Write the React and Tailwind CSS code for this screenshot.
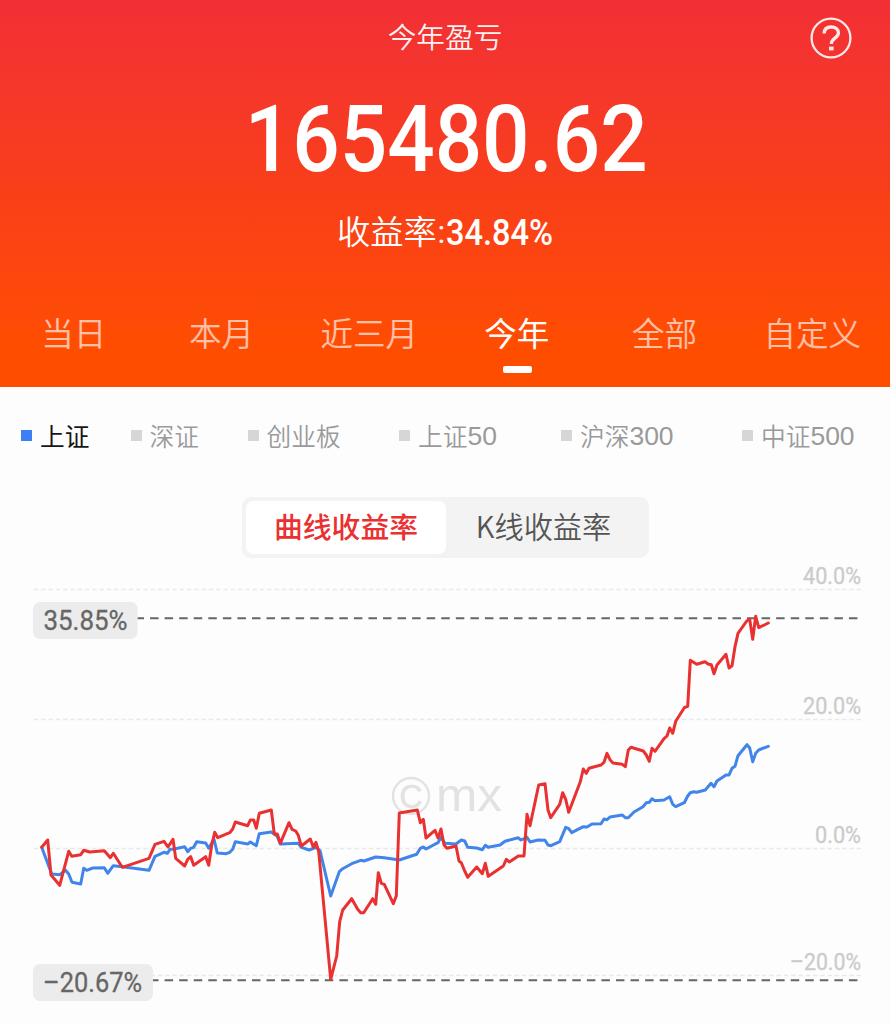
const RED =
  "41.7,847.3 47.7,840 51,875 59.7,885.3 68.7,851.3 71.7,856.3 80.7,854.7 83.7,850.3 89.7,852 104.3,850.7 110.3,857.7 113.3,853.3 122.3,867.3 149,858.3 155,844.3 164,841.3 168,847 173,839.3 175.7,858.3 184.7,866 187.7,859.3 190.7,856.7 193.7,865.3 205.7,856.7 208.7,865.3 211.7,845 214.7,832.3 217.7,837.7 229.7,832.7 232.7,829 235.3,822 247.7,825.7 250.3,820 253.7,820 256.3,828.3 259.3,813.3 271.3,810 274.3,834 277.3,834 280.3,843.3 289,822.7 292,829.3 295.7,831 298.3,835.3 301.3,846 310.3,839 313.3,847.3 316,842.3 318.7,851.7 330.7,979.3 336.7,956 339.7,921.7 342.7,910 351.7,898.7 357.7,909.3 360.7,912.7 363.7,912.7 372.7,898.7 375.7,904.3 378.3,872.7 381.3,883.3 384.3,884.3 393.3,903.7 396.3,895.7 399.3,813 417.3,810 420.3,822.7 423.3,819.3 426,838 435,830.3 438,838 441,829 444,845 447,848.3 456,846 459,861 461.3,862.7 464.7,871 467.7,877.3 476.7,867 482.3,873.7 485.3,863.3 488.3,876.3 503.3,866 506.3,859.3 509.3,862 518.3,856 524,856 527,814.3 530,825.7 538.7,785 545,783.7 548,810 550.7,817.7 559.7,804.3 562.7,792.7 565.7,799.3 568.7,812.3 580.3,781.7 583.3,769 586.3,773.3 589,768.3 601,765 604,762.3 607,753.3 610,759.7 613,763 622.3,764.3 625.3,766.7 628.3,750 631,747.3 643.3,751 646.3,755 649.3,761.3 652,748.3 655,751.3 664,738.7 667,736 669.7,728 672.7,733.3 675.7,721.3 684.3,707.7 687.7,706.3 690.3,660.3 696.7,664.3 705,661.7 708,664 711.3,664.7 714,673.7 717,665 726,654.3 729,668 732,665.7 735,646.7 738,633.3 746.7,621 749.7,619.3 752.7,639.3 755.7,616.3 758.7,627.7 768.3,623";

const BLUE =
  "41.7,847.3 51.7,874 60,874.7 65.3,870 68.7,874 72,882.3 80.7,884 83.7,868.3 86.7,870.3 92.7,868 104.3,867.7 107.7,873.3 113.3,865.7 122.3,866.7 149,870.3 155,856.3 164,852.3 167.3,853.3 170,849.3 173,849.3 184.7,846.7 187.7,851.7 190.7,848.3 193.7,847.3 196.7,841.7 205.7,843 208.7,848.3 214,839.3 217.3,853 226.3,853.7 229.7,852.3 232.7,849.3 235.3,841.7 247.7,844 250.3,842 256.3,845.7 259.3,833.7 271.3,832 277,836 280.3,844 298.3,843.3 301.3,847.3 309.3,850 316,847.3 320,850.7 330.7,896 339.3,871.7 342.7,868.7 351.7,863.7 360.7,860.3 364,861 375.7,857 384.3,857.7 399.3,860 416.7,854.3 420.3,848.3 423.3,847 426,849 438,842.7 441,837.3 445,843.3 456,844 461.3,840 464.7,841 467.7,847.3 476.7,848 482.3,849.7 485.3,845.3 488.3,847.3 500,845 505,841.3 518,837.7 521,840 527,837.3 530,842 538.3,840 545,840.3 548,845 551,845.7 559.7,841.7 565.7,827.3 568.7,828.7 571.7,832.7 583.3,826.7 587,827 592,824 601,823.7 604,819 607,819.7 610,817 622.3,815 625.3,817.7 628.3,817.7 634,812 643,806.7 646.3,802.7 649.3,802.3 652,798.7 655,800.7 664,800 669.7,796.7 672.7,804.3 675.7,806.7 684.3,802.7 687.7,796 690.3,792.7 693.7,791.7 696.7,792.3 705.3,790 711,783.3 714,786.7 717,781 726,775 729,775 732,768.3 735,766.3 738,755.7 747,744.7 749.7,748 752.7,761.7 755.7,753.3 758.7,750 768.3,746.3";

const PERIODS = ["当日", "本月", "近三月", "今年", "全部", "自定义"];

const INDICES = [
  ["上证", ""],
  ["深证", ""],
  ["创业板", ""],
  ["上证", "50"],
  ["沪深", "300"],
  ["中证", "500"],
];

const GRID = [
  { y: 589.5, label: "40.0%", x: 803, w: 58 },
  { y: 719.5, label: "20.0%", x: 803, w: 58 },
  { y: 848.5, label: "0.0%", x: 815, w: 46 },
  { y: 975.5, label: "–20.0%", x: 790, w: 71 },
];

function Header() {
  return (
    <header className="flex h-[387px] w-[890px] flex-col bg-linear-to-b from-[#f22f35] via-[#f93f18] via-50% to-[#ff4d00] to-90% text-white">
      <div className="grid h-[76px] grid-cols-[1fr_auto_1fr] items-center pr-[38px]">
        <span />
        <h1 className="pb-[3px] pl-[38px] text-[28.700px] leading-none font-[350] text-white/95">今年盈亏</h1>
        <svg className="h-[42px] w-[42px] justify-self-end" viewBox="0 0 42 42" fill="none" stroke="#ffe9e6" strokeLinecap="butt">
          <circle cx="21" cy="21" r="19.400" strokeWidth="2.300" />
          <path d="M14.200 16.400c0-4.200 2.800-6.400 7-6.400s7.200 2.300 7.200 6c0 5.200-7 5-7 10.500v.6" strokeWidth="3.300" />
          <rect x="19" y="29.600" width="4.600" height="3.800" fill="#ffe9e6" stroke="none" />
        </svg>
      </div>
      <div className="flex h-[124px] items-center justify-center font-['Roboto'] text-[93px] leading-none font-medium">
        <span className="block origin-center scale-x-[0.898] pt-0.5 pl-0.5">165480.62</span>
      </div>
      <div className="flex h-[64px] items-center pl-[337px] text-[33.300px] leading-none">
        <span className="pb-[4px] font-[350]">收益率</span>
        <span className="w-[9px] text-center font-['Roboto'] text-[32px]">:</span>
        <span className="block origin-left scale-x-[0.905] pt-px font-['Roboto'] text-[36px] font-medium">34.84%</span>
      </div>
      <nav className="grid h-[123px] w-[886px] grid-cols-6 pt-[51px]">
        {PERIODS.map((p) => (
          <div key={p} className="flex flex-col items-center">
            <span className={p === "今年" ? "text-[32.500px] leading-[34px]" : "text-[32.500px] leading-[34px] font-[350] text-white/65"}>{p}</span>
            {p === "今年" && <span className="mt-[17px] ml-px h-[7px] w-[29px] rounded-[2px] bg-white" />}
          </div>
        ))}
      </nav>
    </header>
  );
}

function Legend() {
  return (
    <div className="grid h-[98px] grid-cols-[109.500px_117px_151.500px_162px_181px_1fr] items-center pl-[21px]">
      {INDICES.map(([name, num], i) => (
        <div key={name + num} className="flex h-[26px] items-center">
          <span className={i === 0 ? "mb-px h-[11px] w-[11px] bg-[#3d7ff5]" : "mb-px h-[11px] w-[11px] bg-[#d6d6d6]"} />
          <span className={i === 0 ? "ml-2 flex items-center pb-0.5 text-[24.700px] leading-none text-[#161616]" : "ml-2 flex items-center pb-0.5 text-[24.700px] leading-none font-[350] text-[#9a9a9a]"}>
            {name}
            <span className="pt-0.5 font-['Liberation_Sans'] text-[26.500px]">{num}</span>
          </span>
        </div>
      ))}
    </div>
  );
}

function ModeSwitch() {
  return (
    <div className="ml-[242px] flex h-[61px] w-[407px] rounded-[9px] bg-[#f3f3f3] p-1 text-[28.800px] leading-none">
      <div className="flex w-[200px] items-center justify-center rounded-[7px] bg-white pb-0.5 font-medium text-[#ea3030]">曲线收益率</div>
      <div className="flex flex-1 items-center justify-center pr-1 pb-[3px] text-[29.200px] font-[350] text-[#555]">K线收益率</div>
    </div>
  );
}

function Chart() {
  return (
    <svg className="block h-[466px] w-[891px]" viewBox="0 558 891 466" fill="none" fontFamily="Roboto, sans-serif">
      {GRID.map((g) => (
        <g key={g.label}>
          <line x1="34" x2="861" y1={g.y} y2={g.y} stroke="#e9e9e9" strokeWidth="1.500" strokeDasharray="4.500 2.780" />
          <text x={g.x} y={g.y - 5.5} fontSize="23" fill="#cbcbcb" stroke="#cbcbcb" strokeWidth="0.300" textLength={g.w} lengthAdjust="spacingAndGlyphs">{g.label}</text>
        </g>
      ))}
      <g fontFamily="'Liberation Sans', sans-serif">
        <circle cx="411" cy="796" r="18" stroke="#e2e2e2" strokeWidth="2.400" />
        <text x="399.500" y="807.500" fontSize="33" fill="#e2e2e2" stroke="#e2e2e2" strokeWidth="0.500" textLength="23" lengthAdjust="spacingAndGlyphs">C</text>
        <text x="436" y="811" fontSize="47" fill="#e2e2e2" textLength="66" lengthAdjust="spacingAndGlyphs">mx</text>
      </g>
      <g stroke="#666" strokeWidth="2" strokeDasharray="8.500 6.060">
        <line x1="135.500" x2="858" y1="618.300" y2="618.300" />
        <line x1="135.500" x2="858" y1="980.300" y2="980.300" />
      </g>
      <polyline points={BLUE} stroke="#4285ea" strokeWidth="3" strokeLinejoin="round" strokeLinecap="round" />
      <polyline points={RED} stroke="#e93131" strokeWidth="3" strokeLinejoin="round" strokeLinecap="round" />
      <rect x="33" y="602" width="104.700" height="37" rx="7" fill="#ececec" />
      <rect x="33" y="964" width="120" height="37" rx="7" fill="#ececec" />
      <g fontSize="27" fill="#666" stroke="#666" strokeWidth="0.300">
        <text x="43.500" y="629.500" textLength="84" lengthAdjust="spacingAndGlyphs">35.85%</text>
        <text x="43" y="991.500" textLength="99" lengthAdjust="spacingAndGlyphs">–20.67%</text>
      </g>
    </svg>
  );
}

export default function App() {
  return (
    <main className="flex h-[1024px] w-[891px] flex-col overflow-hidden bg-[#fdfdfd] font-['Noto_Sans_CJK_SC',sans-serif]">
      <Header />
      <div className="pb-3">
        <Legend />
      </div>
      <ModeSwitch />
      <Chart />
    </main>
  );
}
